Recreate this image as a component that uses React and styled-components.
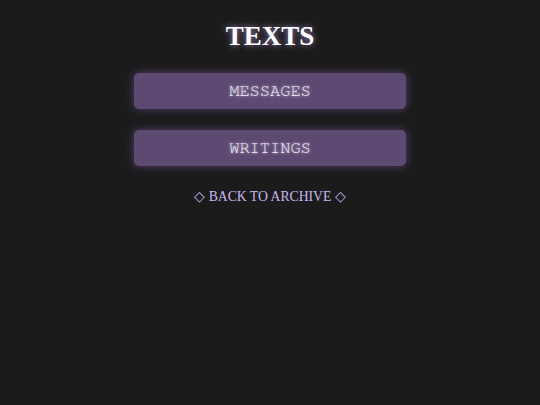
import styled, { createGlobalStyle } from "styled-components";

const GlobalStyle = createGlobalStyle`
  html, body {
    margin: 0;
    padding: 0;
    background: #1c1b1c;
  }
  #root {
    min-height: 100vh;
  }
`;

const Page = styled.div`
  min-height: 100vh;
  box-sizing: border-box;
  display: flex;
  flex-direction: column;
  align-items: center;
  padding-top: 20px;
  background: #1c1b1c;
`;

const Title = styled.h1`
  margin: 0;
  font-family: "Liberation Serif", "Times New Roman", serif;
  font-weight: bold;
  font-size: 27px;
  line-height: 32px;
  color: #ffffff;
  text-shadow: 0 0 6px rgba(210, 180, 255, 0.7);
`;

const Menu = styled.div`
  display: flex;
  flex-direction: column;
  gap: 21px;
  margin-top: 21px;
`;

const MenuButton = styled.button`
  width: 272px;
  height: 36px;
  padding: 0 0 2px;
  border: none;
  border-radius: 5px;
  background: #5c4a72;
  box-shadow: 0 0 8px rgba(150, 115, 200, 0.45);
  font-family: "FreeMono", "Courier New", monospace;
  font-size: 17px;
  color: #f2eef6;
  text-shadow: 0 0 3px rgba(240, 225, 255, 0.9);
  cursor: pointer;
`;

const BackLink = styled.a`
  margin-top: 22px;
  font-family: "Liberation Serif", "Times New Roman", serif;
  font-size: 13.7px;
  color: #c9b9ee;
  text-decoration: none;
  cursor: pointer;
`;

export default function App() {
  return (
    <>
      <GlobalStyle />
      <Page>
        <Title>TEXTS</Title>
        <Menu>
          <MenuButton>MESSAGES</MenuButton>
          <MenuButton>WRITINGS</MenuButton>
        </Menu>
        <BackLink>◇ BACK TO ARCHIVE ◇</BackLink>
      </Page>
    </>
  );
}
